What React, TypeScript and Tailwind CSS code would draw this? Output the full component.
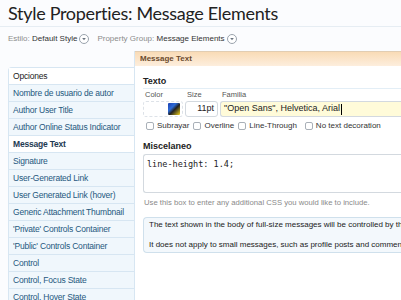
import React from 'react';

const navItems = [
  'Nombre de usuario de autor',
  'Author User Title',
  'Author Online Status Indicator',
  'Message Text',
  'Signature',
  'User-Generated Link',
  'User Generated Link (hover)',
  'Generic Attachment Thumbnail',
  "'Private' Controls Container",
  "'Public' Controls Container",
  'Control',
  'Control, Focus State',
  'Control, Hover State',
];

function Chevron() {
  return (
    <span className="inline-flex items-center justify-center w-[10px] h-[10px] rounded-full border border-[#9aa3ad] bg-white ml-[2px] align-middle">
      <svg viewBox="0 0 10 10" className="w-[6px] h-[6px]">
        <path d="M2 3.5 L5 7 L8 3.5 Z" fill="#6b7580" />
      </svg>
    </span>
  );
}

function Check({ label }: { label: string }) {
  return (
    <label className="flex items-center gap-[3px]">
      <span className="w-[8px] h-[8px] rounded-[2px] border border-[#a9b0b8] bg-white" />
      <span>{label}</span>
    </label>
  );
}

export default function App() {
  return (
    <div className="w-[401px] h-[300px] overflow-hidden bg-[#fbfcfe] text-[#222] font-['Liberation_Sans',Arial,sans-serif]">
      {/* Title */}
      <div className="px-[8px] pt-[1px] h-[27px] border-b border-[#e6edf3]">
        <h1 className="text-[18px] leading-[25px] tracking-[-0.3px] text-[#222] font-['Lato',sans-serif] whitespace-nowrap">
          Style Properties: Message Elements
        </h1>
      </div>

      {/* Breadcrumb selectors */}
      <div className="flex items-center gap-[8px] px-[8px] h-[23px] text-[8px] whitespace-nowrap">
        <span className="flex items-center">
          <span className="text-[#8c8c8c]">Estilo:&nbsp;</span>
          <span className="text-[#333]">Default Style</span>
          <Chevron />
        </span>
        <span className="flex items-center">
          <span className="text-[#8c8c8c]">Property Group:&nbsp;</span>
          <span className="text-[#333]">Message Elements</span>
          <Chevron />
        </span>
      </div>

      <div className="flex pt-[1px]">
        {/* Sidebar */}
        <div className="w-[134px] pl-[8px] pt-[16px] shrink-0">
          <div className="rounded-tl-[4px] border border-r-0 border-[#d7e6f2] bg-[#f0f7fc] text-[8.5px] tracking-[-0.2px] leading-[16px] whitespace-nowrap">
            <div className="h-[17px] px-[4px] bg-white text-[#222] border-b border-[#d7e6f2]">Opciones</div>
            {navItems.map((item) => (
              <div
                key={item}
                className={
                  item === 'Message Text'
                    ? 'h-[17px] px-[4px] bg-white text-[#1d3a52] font-bold -mr-[8px] border-b border-[#d7e6f2]'
                    : 'h-[17px] px-[4px] text-[#25577e] border-b border-[#d7e6f2]'
                }
              >
                {item}
              </div>
            ))}
          </div>
        </div>

        {/* Main panel */}
        <div className="flex-1 min-w-0 border-l border-[#d7e6f2]">
          <div className="h-[15px] px-[5px] flex items-center bg-gradient-to-b from-[#f9dbb6] to-[#fdeedd] border-t border-[#e2cdb2] text-[8px] font-bold text-[#6b4a2c] whitespace-nowrap">
            Message Text
          </div>
          <div className="bg-white pl-[8px] pt-[10px] pb-[60px] text-[8px] whitespace-nowrap">
            <div className="font-bold text-[9px] leading-[10px] text-[#222] h-[13px] border-b border-[#e3eef6]">Texto</div>

            <div className="flex gap-[2px] mt-[1px]">
              <div className="flex flex-col">
                <span className="h-[10px] leading-[10px] text-[#555] text-[7.5px] pl-[2px]">Color</span>
                <div className="mt-[1px] w-[40px] h-[16px] border border-dashed border-[#dde2e8] rounded-[3px] flex items-center justify-end pr-[2px]">
                  <span className="w-[12px] h-[12px] rounded-[1px] bg-[linear-gradient(135deg,#1d3fb0_0%,#2d6bd6_35%,#222_55%,#f2d21a_100%)]" />
                </div>
              </div>
              <div className="flex flex-col">
                <span className="h-[10px] leading-[10px] text-[#555] text-[7.5px] pl-[2px]">Size</span>
                <div className="mt-[1px] w-[33px] h-[16px] border border-[#d3d9df] rounded-[3px] bg-white flex items-center justify-end pr-[3px] text-[9px] text-[#222]">
                  11pt
                </div>
              </div>
              <div className="flex flex-col flex-1 min-w-0">
                <span className="h-[10px] leading-[10px] text-[#555] text-[7.5px] pl-[2px]">Familia</span>
                <div className="mt-[1px] h-[16px] border border-r-0 border-[#d3d9df] rounded-l-[3px] bg-[#fffbd9] flex items-center pl-[3px] text-[9px] text-[#222]">
                  "Open Sans", Helvetica, Arial<span className="w-px h-[11px] bg-black ml-px" />
                </div>
              </div>
            </div>

            <div className="flex items-center gap-[4px] mt-[3px] pl-[3px] text-[8px] text-[#333]">
              <Check label="Subrayar" />
              <Check label="Overline" />
              <Check label="Line-Through" />
              <span className="ml-[4px]"><Check label="No text decoration" /></span>
            </div>

            <div className="font-bold text-[9px] text-[#222] mt-[8px] h-[12px] leading-[12px]">Miscelaneo</div>
            <div className="mt-[2px] h-[39px] border border-r-0 border-[#d3d9df] rounded-l-[3px] bg-white px-[3px] pt-[3px] font-['DejaVu_Sans_Mono',monospace] text-[8.5px] text-[#222]">
              line-height: 1.4;
            </div>
            <div className="mt-[4px] text-[7.7px] text-[#8a8a8a] pl-px">
              Use this box to enter any additional CSS you would like to include.
            </div>

            <div className="mt-[8px] border border-r-0 border-[#cfe0ec] rounded-l-[4px] bg-[#f3f8fc] px-[5px] text-[8px] leading-[14px] text-[#222]">
              <div>The text shown in the body of full-size messages will be controlled by this property.</div>
              <div className="mt-[6px]">It does not apply to small messages, such as profile posts and comments.</div>
            </div>
          </div>
        </div>
      </div>
    </div>
  );
}
